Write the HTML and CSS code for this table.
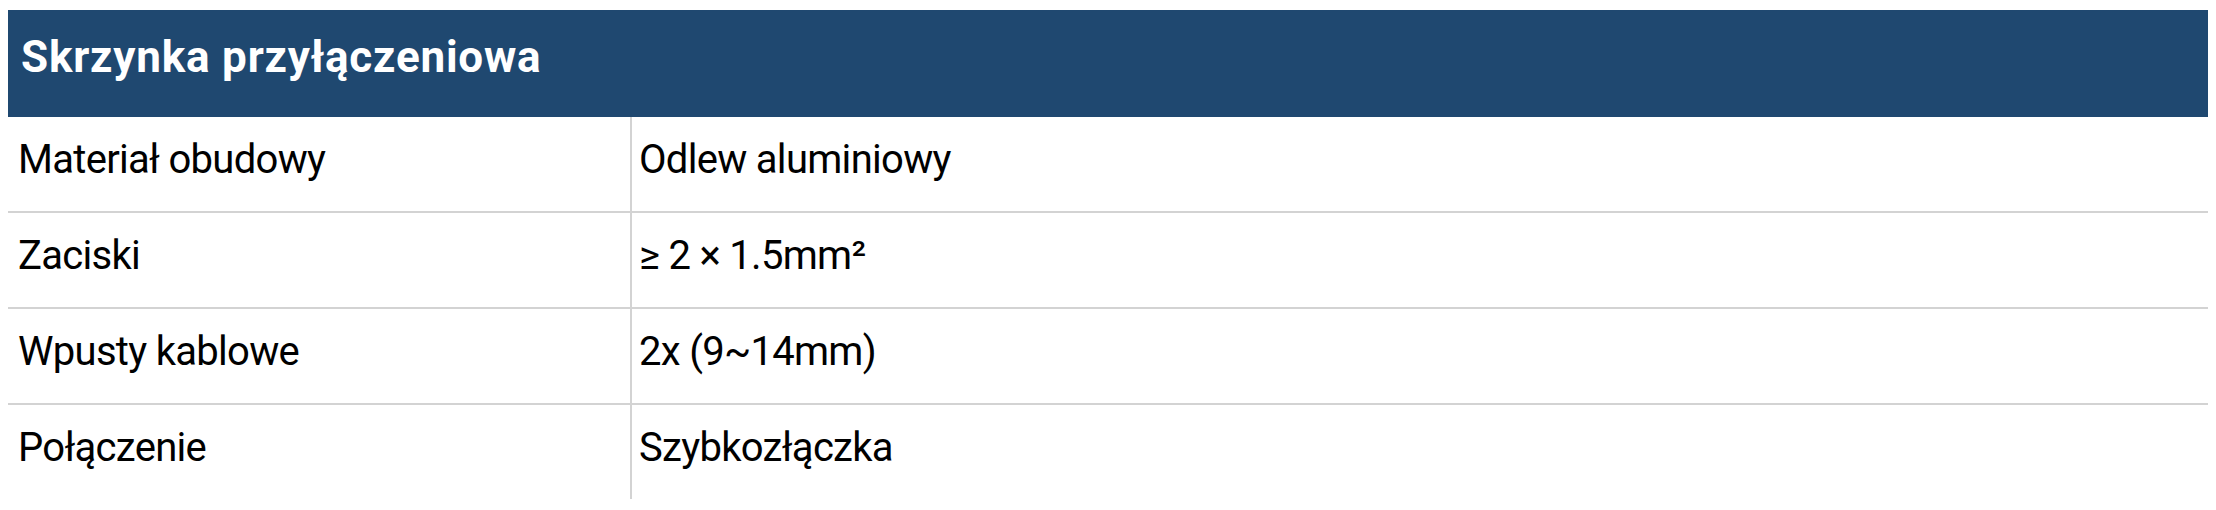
FILE: index.html
```html
<!DOCTYPE html>
<html lang="pl">
<head>
<meta charset="utf-8">
<title>Skrzynka przyłączeniowa</title>
<link rel="stylesheet" href="styles.css">
</head>
<body>
<table class="spec">
  <colgroup>
    <col class="spec-col-label">
    <col class="spec-col-value">
  </colgroup>
  <thead>
    <tr><th class="spec-title" colspan="2">Skrzynka przyłączeniowa</th></tr>
  </thead>
  <tbody>
    <tr><td class="spec-label">Materiał obudowy</td><td class="spec-value">Odlew aluminiowy</td></tr>
    <tr><td class="spec-label">Zaciski</td><td class="spec-value">≥ 2 × 1.5mm²</td></tr>
    <tr><td class="spec-label">Wpusty kablowe</td><td class="spec-value">2x (9~14mm)</td></tr>
    <tr><td class="spec-label">Połączenie</td><td class="spec-value">Szybkozłączka</td></tr>
  </tbody>
</table>
</body>
</html>
```

FILE: styles.css
```css
html, body {
  background: #ffffff;
}

body {
  margin: 10px 8px 0 8px;
  font-family: Roboto, "Open Sans", sans-serif;
  color: #000000;
}

.spec {
  width: 2200px;
  border-collapse: collapse;
  table-layout: fixed;
}

.spec-col-label {
  width: 623px;
}

.spec-title {
  background: #1f4870;
  color: #ffffff;
  font-weight: 700;
  font-size: 44px;
  line-height: 48px;
  letter-spacing: 0.8px;
  text-align: left;
  padding: 23px 12px 36px 13px;
}

.spec td {
  font-size: 40px;
  line-height: 47px;
  letter-spacing: -0.7px;
  padding: 19px 8px 28px 10px;
  vertical-align: top;
  border-bottom: 2px solid #d3d3d3;
}

.spec tbody tr:last-child td {
  border-bottom: none;
}

.spec td.spec-label {
  border-right: 2px solid #d3d3d3;
}

.spec td.spec-value {
  padding-left: 7px;
}
```
